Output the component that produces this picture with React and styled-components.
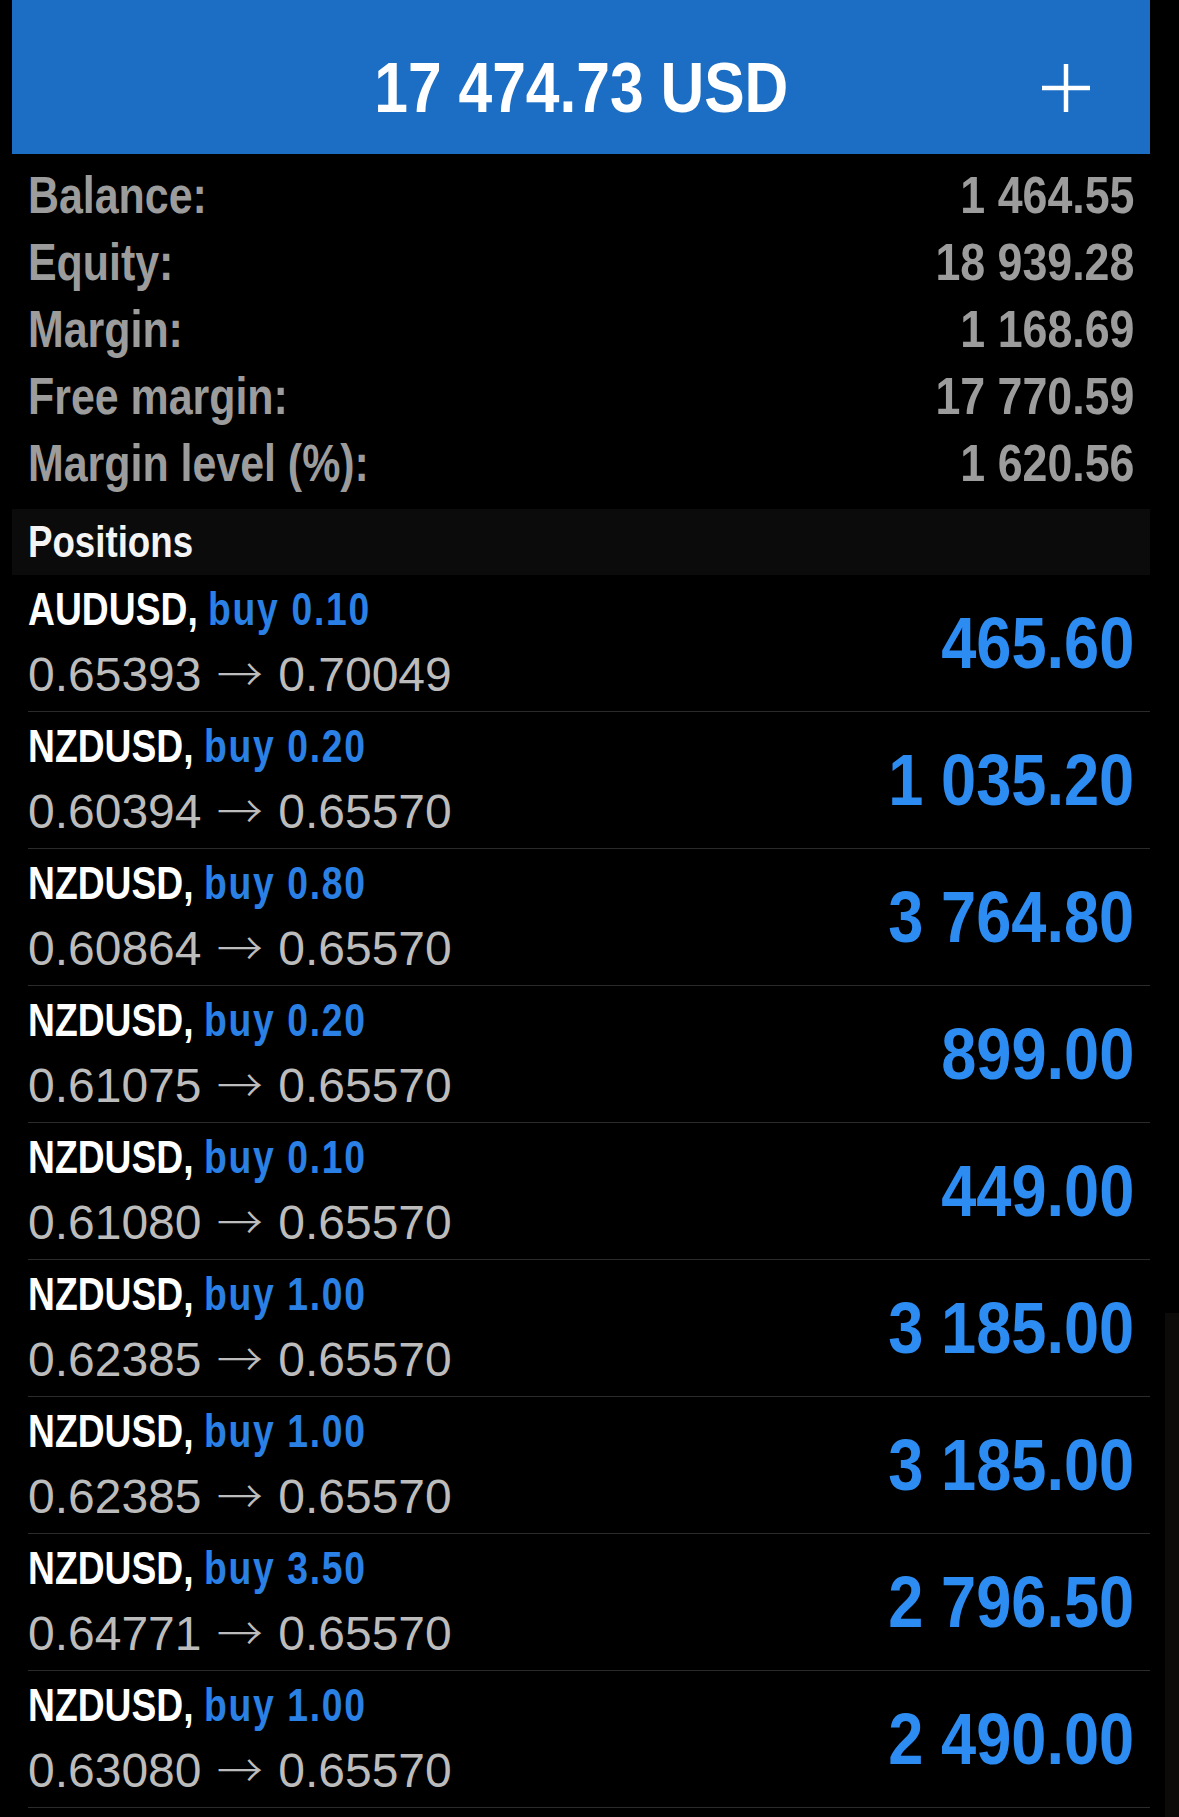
import React from "react";
import styled, { createGlobalStyle } from "styled-components";

const GlobalStyle = createGlobalStyle`
  html, body {
    margin: 0;
    padding: 0;
    background: #000;
  }
  body {
    font-family: "Liberation Sans", Arial, sans-serif;
    -webkit-font-smoothing: antialiased;
  }
`;

const SANS = `"Liberation Sans", Arial, sans-serif`;

/* Liberation Sans Bold compressed horizontally = Arial Narrow Bold look */
const Squeeze = styled.span`
  display: inline-block;
  white-space: nowrap;
  transform: scaleX(${(p) => p.$x || 0.82});
  transform-origin: ${(p) => p.$origin || "left"} center;
`;

const Page = styled.div`
  width: 1179px;
  min-height: 1817px;
  background: #000;
  position: relative;
  overflow: hidden;
`;

const Panel = styled.div`
  margin-left: 12px;
  width: 1138px;
`;

const Header = styled.header`
  height: 154px;
  background: #1b6ec4;
  display: grid;
  grid-template-columns: 1fr auto 1fr;
  align-items: center;
  padding-top: 22px;
  box-sizing: border-box;
`;

const Title = styled.h1`
  grid-column: 2;
  margin: 0;
  font-family: ${SANS};
  font-weight: 700;
  font-size: 70px;
  line-height: 1;
  color: #fff;
`;

const PlusButton = styled.button`
  grid-column: 3;
  justify-self: end;
  margin-right: 56px;
  width: 56px;
  height: 56px;
  padding: 0;
  border: none;
  background: transparent;
  display: flex;
  align-items: center;
  justify-content: center;
`;

const Summary = styled.section`
  padding: 7px 16px 13px;
`;

const SummaryRow = styled.div`
  display: flex;
  justify-content: space-between;
  align-items: center;
  height: 67px;
  font-family: ${SANS};
  font-weight: 700;
  font-size: 52px;
  color: #9c9c9c;
`;

const SectionBar = styled.div`
  height: 66px;
  background: #0b0b0b;
  display: flex;
  align-items: center;
  padding: 0 16px;
  font-family: ${SANS};
  font-weight: 700;
  font-size: 45px;
  color: #f4f4f4;
`;

const List = styled.div`
  padding-left: 16px;
`;

const PositionRow = styled.div`
  height: 137px;
  box-sizing: border-box;
  border-bottom: 1px solid #2b2b2b;
  padding: 2px 16px 4px 0;
  display: flex;
  justify-content: space-between;
  align-items: center;
`;

const PositionInfo = styled.div`
  display: flex;
  flex-direction: column;
`;

const SymbolLine = styled.div`
  height: 65px;
  line-height: 65px;
  font-family: ${SANS};
  font-weight: 700;
  font-size: 46px;
  color: #fff;
  white-space: nowrap;
`;

const Side = styled.span`
  color: #2a80e4;
  letter-spacing: 2.1px;
`;

const PriceLine = styled.div`
  height: 65px;
  line-height: 58px;
  font-family: ${SANS};
  font-weight: 400;
  font-size: 48px;
  color: #bcbcbc;
  white-space: nowrap;
`;

const Arrow = styled.span`
  font-family: "Noto Sans CJK JP", "DejaVu Sans", sans-serif;
  font-weight: 300;
  font-size: 46px;
  margin: 0 2px;
`;

const Profit = styled.div`
  font-family: ${SANS};
  font-weight: 700;
  font-size: 73px;
  color: #2d8cf2;
  white-space: nowrap;
`;

const ScrollTrack = styled.div`
  position: absolute;
  right: 0;
  top: 1313px;
  bottom: 0;
  width: 14px;
  background: #0c0b0a;
`;

const summary = [
  ["Balance:", "1 464.55"],
  ["Equity:", "18 939.28"],
  ["Margin:", "1 168.69"],
  ["Free margin:", "17 770.59"],
  ["Margin level (%):", "1 620.56"],
];

const positions = [
  ["AUDUSD", "buy 0.10", "0.65393", "0.70049", "465.60"],
  ["NZDUSD", "buy 0.20", "0.60394", "0.65570", "1 035.20"],
  ["NZDUSD", "buy 0.80", "0.60864", "0.65570", "3 764.80"],
  ["NZDUSD", "buy 0.20", "0.61075", "0.65570", "899.00"],
  ["NZDUSD", "buy 0.10", "0.61080", "0.65570", "449.00"],
  ["NZDUSD", "buy 1.00", "0.62385", "0.65570", "3 185.00"],
  ["NZDUSD", "buy 1.00", "0.62385", "0.65570", "3 185.00"],
  ["NZDUSD", "buy 3.50", "0.64771", "0.65570", "2 796.50"],
  ["NZDUSD", "buy 1.00", "0.63080", "0.65570", "2 490.00"],
];

function PlusIcon() {
  return (
    <svg width="54" height="54" viewBox="0 0 54 54">
      <path d="M27 3V51M3 27H51" stroke="#fff" strokeWidth="4.5" strokeLinecap="butt" />
    </svg>
  );
}

export default function App() {
  return (
    <>
      <GlobalStyle />
      <Page>
        <Panel>
          <Header>
            <Title>
              <Squeeze $x={0.865} $origin="center">17 474.73 USD</Squeeze>
            </Title>
            <PlusButton aria-label="Add">
              <PlusIcon />
            </PlusButton>
          </Header>
          <Summary>
            {summary.map(([label, value]) => (
              <SummaryRow key={label}>
                <Squeeze $x={0.825}>{label}</Squeeze>
                <Squeeze $x={0.86} $origin="right">{value}</Squeeze>
              </SummaryRow>
            ))}
          </Summary>
          <SectionBar>
            <Squeeze $x={0.815}>Positions</Squeeze>
          </SectionBar>
          <List>
            {positions.map(([sym, side, open, cur, profit], i) => (
              <PositionRow key={i}>
                <PositionInfo>
                  <SymbolLine>
                    <Squeeze $x={0.81}>
                      {sym}, <Side>{side}</Side>
                    </Squeeze>
                  </SymbolLine>
                  <PriceLine>
                    {open} <Arrow>→</Arrow> {cur}
                  </PriceLine>
                </PositionInfo>
                <Profit>
                  <Squeeze $x={0.865} $origin="right">{profit}</Squeeze>
                </Profit>
              </PositionRow>
            ))}
          </List>
        </Panel>
        <ScrollTrack />
      </Page>
    </>
  );
}
